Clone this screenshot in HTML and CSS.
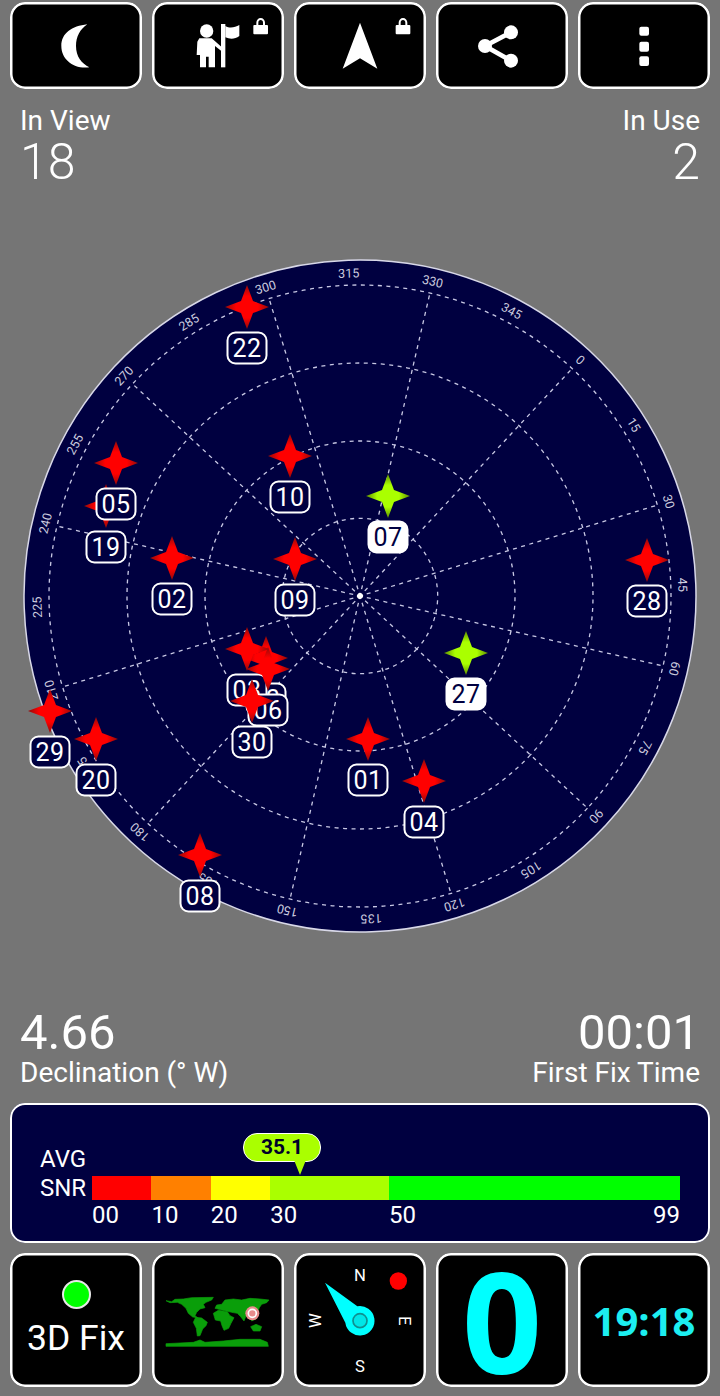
FILE: index.html
```html
<!DOCTYPE html>
<html lang="en">
<head>
    <meta charset="UTF-8">
    <meta name="viewport" content="width=device-width, initial-scale=1.0">
    <title>GPS Test</title>
    <link rel="stylesheet" href="styles.css">
</head>
<body>
    <div class="page">
        <!-- Top buttons -->
        <div class="tile-row tile-row-top">
            <div class="tile">
                <svg class="tile-art" viewBox="30 6 396 261">
                    <path class="art-white" d="M262 73C215 78 184 100 184 138C184 178 220 208 268 202C245 190 228 170 228 138C228 110 240 88 262 73Z"/>
                </svg>
            </div>
            <div class="tile">
                <svg class="tile-art" viewBox="6 6 396 261">
                    <circle class="art-white" cx="170" cy="93" r="20"/>
                    <path class="art-white" d="M148 115H185L214 140V153L195 138V202H176V170H168V202H150V165H140L142 125Z"/>
                    <rect class="art-white" x="213" y="72" width="13" height="130"/>
                    <path class="art-white" d="M226 78C240 86 255 82 268 75V108C255 118 240 118 226 112Z"/>
                    <path class="art-white" d="M310 78Q310 75 313 75H351Q354 75 354 78V100Q354 103 351 103H313Q310 103 310 100Z"/>
                    <path class="art-line" d="M322 76V68A10 11 0 0 1 342 68V76"/>
                </svg>
            </div>
            <div class="tile">
                <svg class="tile-art" viewBox="432 6 396 261">
                    <path class="art-white" d="M630 68L682 206L630 175L578 206Z"/>
                    <path class="art-white" d="M737 78Q737 75 740 75H778Q781 75 781 78V100Q781 103 778 103H740Q737 103 737 100Z"/>
                    <path class="art-line" d="M749 76V68A10 11 0 0 1 769 68V76"/>
                </svg>
            </div>
            <div class="tile">
                <svg class="tile-art" viewBox="18 6 396 261">
                    <circle class="art-white" cx="243" cy="97" r="21"/>
                    <circle class="art-white" cx="165" cy="138" r="21"/>
                    <circle class="art-white" cx="243" cy="182" r="21"/>
                    <path class="art-share" d="M243 97L165 138L243 182"/>
                </svg>
            </div>
            <div class="tile">
                <svg class="tile-art" viewBox="444 6 396 261">
                    <rect class="art-white" x="628" y="80" width="29" height="27" rx="6"/>
                    <rect class="art-white" x="628" y="125" width="29" height="30" rx="6"/>
                    <rect class="art-white" x="628" y="169" width="29" height="29" rx="6"/>
                </svg>
            </div>
        </div>

        <div class="stats stats-top">
            <div>
                <div class="stat-label">In View</div>
                <div class="stat-value">18</div>
            </div>
            <div class="stat-right">
                <div class="stat-label">In Use</div>
                <div class="stat-value">2</div>
            </div>
        </div>

        <!-- Sky plot -->
        <div class="radar">
            <svg class="radar-svg" viewBox="0 236 720 720">
                <defs>
                    <radialGradient id="star-red" gradientUnits="userSpaceOnUse" cx="0" cy="0" r="22">
                        <stop offset="0.5" stop-color="#ff0000"/>
                        <stop offset="1" stop-color="#8f0a0a"/>
                    </radialGradient>
                    <radialGradient id="star-green" gradientUnits="userSpaceOnUse" cx="0" cy="0" r="22">
                        <stop offset="0.5" stop-color="#aaff00"/>
                        <stop offset="1" stop-color="#5c8c00"/>
                    </radialGradient>
                    <path id="star" d="M0 -22L6 -6L22 0L6 6L0 22L-6 6L-22 0L-6 -6Z"/>
                </defs>

                <g transform="translate(360 595) rotate(43)">
                    <circle class="dial" r="336"/>
                    <circle class="ring" r="77.7"/>
                    <circle class="ring" r="155"/>
                    <circle class="ring" r="233"/>
                    <circle class="ring" r="311"/>
                    <line class="ring" y1="-7" y2="-311"/>
                    <line class="ring" y1="-7" y2="-311" transform="rotate(30)"/>
                    <line class="ring" y1="-7" y2="-311" transform="rotate(60)"/>
                    <line class="ring" y1="-7" y2="-311" transform="rotate(90)"/>
                    <line class="ring" y1="-7" y2="-311" transform="rotate(120)"/>
                    <line class="ring" y1="-7" y2="-311" transform="rotate(150)"/>
                    <line class="ring" y1="-7" y2="-311" transform="rotate(180)"/>
                    <line class="ring" y1="-7" y2="-311" transform="rotate(210)"/>
                    <line class="ring" y1="-7" y2="-311" transform="rotate(240)"/>
                    <line class="ring" y1="-7" y2="-311" transform="rotate(270)"/>
                    <line class="ring" y1="-7" y2="-311" transform="rotate(300)"/>
                    <line class="ring" y1="-7" y2="-311" transform="rotate(330)"/>
                    <circle class="hub" r="3"/>
                    <text class="tick" y="-318.5">0</text>
                    <text class="tick" y="-318.5" transform="rotate(15)">15</text>
                    <text class="tick" y="-318.5" transform="rotate(30)">30</text>
                    <text class="tick" y="-318.5" transform="rotate(45)">45</text>
                    <text class="tick" y="-318.5" transform="rotate(60)">60</text>
                    <text class="tick" y="-318.5" transform="rotate(75)">75</text>
                    <text class="tick" y="-318.5" transform="rotate(90)">90</text>
                    <text class="tick" y="-318.5" transform="rotate(105)">105</text>
                    <text class="tick" y="-318.5" transform="rotate(120)">120</text>
                    <text class="tick" y="-318.5" transform="rotate(135)">135</text>
                    <text class="tick" y="-318.5" transform="rotate(150)">150</text>
                    <text class="tick" y="-318.5" transform="rotate(165)">165</text>
                    <text class="tick" y="-318.5" transform="rotate(180)">180</text>
                    <text class="tick" y="-318.5" transform="rotate(195)">195</text>
                    <text class="tick" y="-318.5" transform="rotate(210)">210</text>
                    <text class="tick" y="-318.5" transform="rotate(225)">225</text>
                    <text class="tick" y="-318.5" transform="rotate(240)">240</text>
                    <text class="tick" y="-318.5" transform="rotate(255)">255</text>
                    <text class="tick" y="-318.5" transform="rotate(270)">270</text>
                    <text class="tick" y="-318.5" transform="rotate(285)">285</text>
                    <text class="tick" y="-318.5" transform="rotate(300)">300</text>
                    <text class="tick" y="-318.5" transform="rotate(315)">315</text>
                    <text class="tick" y="-318.5" transform="rotate(330)">330</text>
                    <text class="tick" y="-318.5" transform="rotate(345)">345</text>
                </g>

                <g class="sat" transform="translate(247 306)"><use href="#star"/><rect x="-19.5" y="25.5" width="39" height="31" rx="8"/><text y="49.5">22</text></g>
                <g class="sat" transform="translate(290 455)"><use href="#star"/><rect x="-19.5" y="25.5" width="39" height="31" rx="8"/><text y="49.5">10</text></g>
                <g class="sat sat-used" transform="translate(388 495)"><use href="#star"/><rect x="-19.5" y="25.5" width="39" height="31" rx="8"/><text y="49.5">07</text></g>
                <g class="sat" transform="translate(106 505)"><use href="#star"/><rect x="-19.5" y="25.5" width="39" height="31" rx="8"/><text y="49.5">19</text></g>
                <g class="sat" transform="translate(116 462)"><use href="#star"/><rect x="-19.5" y="25.5" width="39" height="31" rx="8"/><text y="49.5">05</text></g>
                <g class="sat" transform="translate(172 557)"><use href="#star"/><rect x="-19.5" y="25.5" width="39" height="31" rx="8"/><text y="49.5">02</text></g>
                <g class="sat" transform="translate(295 558)"><use href="#star"/><rect x="-19.5" y="25.5" width="39" height="31" rx="8"/><text y="49.5">09</text></g>
                <g class="sat" transform="translate(647 559)"><use href="#star"/><rect x="-19.5" y="25.5" width="39" height="31" rx="8"/><text y="49.5">28</text></g>
                <g class="sat sat-used" transform="translate(466 652)"><use href="#star"/><rect x="-19.5" y="25.5" width="39" height="31" rx="8"/><text y="49.5">27</text></g>
                <g class="sat" transform="translate(266 657)"><use href="#star"/><rect x="-19.5" y="25.5" width="39" height="31" rx="8"/><text y="49.5">13</text></g>
                <g class="sat" transform="translate(247 648)"><use href="#star"/><rect x="-19.5" y="25.5" width="39" height="31" rx="8"/><text y="49.5">03</text></g>
                <g class="sat" transform="translate(268 668)"><use href="#star"/><rect x="-19.5" y="25.5" width="39" height="31" rx="8"/><text y="49.5">06</text></g>
                <g class="sat" transform="translate(252 700)"><use href="#star"/><rect x="-19.5" y="25.5" width="39" height="31" rx="8"/><text y="49.5">30</text></g>
                <g class="sat" transform="translate(368 738)"><use href="#star"/><rect x="-19.5" y="25.5" width="39" height="31" rx="8"/><text y="49.5">01</text></g>
                <g class="sat" transform="translate(424 780)"><use href="#star"/><rect x="-19.5" y="25.5" width="39" height="31" rx="8"/><text y="49.5">04</text></g>
                <g class="sat" transform="translate(50 710)"><use href="#star"/><rect x="-19.5" y="25.5" width="39" height="31" rx="8"/><text y="49.5">29</text></g>
                <g class="sat" transform="translate(96 738)"><use href="#star"/><rect x="-19.5" y="25.5" width="39" height="31" rx="8"/><text y="49.5">20</text></g>
                <g class="sat" transform="translate(200 854)"><use href="#star"/><rect x="-19.5" y="25.5" width="39" height="31" rx="8"/><text y="49.5">08</text></g>
            </svg>
        </div>

        <div class="stats stats-bottom">
            <div>
                <div class="stat-value">4.66</div>
                <div class="stat-label">Declination (° W)</div>
            </div>
            <div class="stat-right">
                <div class="stat-value">00:01</div>
                <div class="stat-label">First Fix Time</div>
            </div>
        </div>

        <!-- Average SNR -->
        <div class="snr-panel">
            <div class="snr-names">
                <div>AVG</div>
                <div>SNR</div>
            </div>
            <div class="snr-scale">
                <div class="snr-bubble">35.1</div>
                <div class="snr-seg seg-10"><div class="snr-color color-red"></div><div class="snr-num">00</div></div>
                <div class="snr-seg seg-10"><div class="snr-color color-orange"></div><div class="snr-num">10</div></div>
                <div class="snr-seg seg-10"><div class="snr-color color-yellow"></div><div class="snr-num">20</div></div>
                <div class="snr-seg seg-20"><div class="snr-color color-lime"></div><div class="snr-num">30</div></div>
                <div class="snr-seg seg-49"><div class="snr-color color-green"></div><div class="snr-num snr-num-ends"><span>50</span><span>99</span></div></div>
            </div>
        </div>

        <!-- Bottom buttons -->
        <div class="tile-row tile-row-bottom">
            <div class="tile tile-fix">
                <div class="fix-dot"></div>
                <div class="fix-text">3D Fix</div>
            </div>
            <div class="tile">
                <svg class="tile-art" viewBox="6 -96 396 402">
                    <g class="land">
                        <path d="M48 47L65 50L75 43L100 42L125 38L190 37L185 45L168 52L160 58L165 68L150 72L140 82L135 92L143 98L128 96L115 85L108 70L95 58L82 52L60 53Z"/>
                        <path d="M137 97L155 99L172 112L168 122L158 132L150 152L142 153L139 130L130 112Z"/>
                        <path d="M195 70L200 60L215 58L225 45L250 42L275 45L300 40L330 42L357 45L350 53L335 58L328 68L322 82L312 90L318 102L305 108L298 95L288 92L282 108L272 95L262 85L245 82L228 78L215 75Z"/>
                        <path d="M190 85L205 76L232 80L240 92L252 98L243 115L236 130L222 136L216 122L212 108L196 105Z"/>
                        <path d="M302 125L318 118L335 125L330 138L310 138Z"/>
                        <path d="M48 176L90 174L130 172L150 165L165 172L220 168L270 163L330 163L352 172L355 184L48 184Z"/>
                    </g>
                    <circle class="pin-outer" cx="307" cy="85" r="21"/>
                    <circle class="pin-ring" cx="307" cy="85" r="12"/>
                </svg>
            </div>
            <div class="tile">
                <svg class="tile-art" viewBox="-18 -21 396 402">
                    <text class="compass-letter" x="180" y="62">N</text>
                    <text class="compass-letter" transform="translate(315 182) rotate(90)" y="17">E</text>
                    <text class="compass-letter" x="180" y="337">S</text>
                    <text class="compass-letter" transform="translate(45 182) rotate(-90)" y="17">W</text>
                    <circle class="compass-dot" cx="295" cy="63" r="26"/>
                    <path class="needle" d="M75 68L172 139A44 44 0 1 1 136 188Z"/>
                    <circle class="needle-eye" cx="180" cy="182" r="21"/>
                </svg>
            </div>
            <div class="tile tile-center">
                <span class="big-zero">0</span>
            </div>
            <div class="tile tile-center">
                <span class="clock">19:18</span>
            </div>
        </div>
    </div>
</body>
</html>
```

FILE: styles.css
```css
html, body {
    margin: 0;
    padding: 0;
    background: #757575;
}

.page {
    width: 720px;
    height: 1396px;
    box-sizing: border-box;
    padding: 2px 10px 9px;
    display: flex;
    flex-direction: column;
    font-family: Roboto, sans-serif;
    color: #fff;
    overflow: hidden;
}

/* Buttons */
.tile-row {
    display: flex;
    gap: 10px;
    flex: none;
}

.tile-row-top .tile {
    height: 87px;
}

.tile-row-bottom .tile {
    height: 134px;
}

.tile {
    width: 132px;
    box-sizing: border-box;
    background: #000;
    border-radius: 15px;
    box-shadow: inset 0 0 0 2.5px #fff;
}

.tile-art {
    display: block;
    width: 100%;
    height: 100%;
}

.tile-center {
    display: flex;
    justify-content: center;
    align-items: center;
}

.art-white {
    fill: #fff;
}

.art-line {
    fill: none;
    stroke: #fff;
    stroke-width: 6;
}

.art-share {
    fill: none;
    stroke: #fff;
    stroke-width: 14;
}

/* Number blocks */
.stats {
    display: flex;
    justify-content: space-between;
    padding: 0 10px;
    flex: none;
}

.stats-top {
    margin-top: 17px;
}

.stat-right {
    text-align: right;
}

.stat-label {
    font-size: 28px;
    line-height: 30px;
}

.stat-value {
    font-size: 49px;
    line-height: 51px;
}

.stats-top .stat-value {
    font-size: 50px;
    font-weight: 300;
    margin: 1px 0 -2px;
}

/* Sky plot */
.radar {
    flex: 1;
    margin: 0 -10px;
    display: flex;
    align-items: center;
}

.radar-svg {
    display: block;
    width: 720px;
    height: 720px;
    overflow: visible;
}

.dial {
    fill: #000040;
    stroke: #d8d8e8;
    stroke-width: 1.5;
}

.ring {
    fill: none;
    stroke: #c8c8e4;
    stroke-width: 1.3;
    stroke-dasharray: 4 4.5;
}

.hub {
    fill: #fff;
}

.tick {
    fill: #ccccdf;
    font-size: 12.5px;
    text-anchor: middle;
}

.sat use {
    fill: url(#star-red);
}

.sat rect {
    fill: #000040;
    stroke: #fff;
    stroke-width: 2;
}

.sat text {
    fill: #fff;
    font-size: 25px;
    letter-spacing: 0.5px;
    text-anchor: middle;
}

.sat-used use {
    fill: url(#star-green);
}

.sat-used rect {
    fill: #fff;
}

.sat-used text {
    fill: #000040;
}

/* SNR panel */
.snr-panel {
    flex: none;
    height: 140px;
    box-sizing: border-box;
    margin: 15px 0 10px;
    padding: 0 30px;
    display: flex;
    background: #000040;
    border-radius: 15px;
    box-shadow: inset 0 0 0 2px #fff;
}

.snr-names {
    width: 52px;
    flex: none;
    margin-top: 42px;
    font-size: 24px;
    line-height: 29px;
}

.snr-scale {
    flex: 1;
    display: flex;
    position: relative;
    margin-top: 73px;
}

.seg-10 {
    flex: 10;
}

.seg-20 {
    flex: 20;
}

.seg-49 {
    flex: 49;
}

.snr-color {
    height: 24px;
}

.color-red {
    background: #ff0000;
}

.color-orange {
    background: #ff8000;
}

.color-yellow {
    background: #ffff00;
}

.color-lime {
    background: #aaff00;
}

.color-green {
    background: #00ff00;
}

.snr-num {
    font-size: 24px;
    line-height: 31px;
}

.snr-num-ends {
    display: flex;
    justify-content: space-between;
}

.snr-bubble {
    position: absolute;
    left: 151px;
    top: -43px;
    width: 78px;
    height: 29px;
    box-sizing: border-box;
    background: #aaff00;
    border: 1px solid #fff;
    border-radius: 14px;
    color: #00002a;
    font-size: 21px;
    font-weight: 700;
    line-height: 27px;
    text-align: center;
}

.snr-bubble::after {
    content: "";
    position: absolute;
    left: 50px;
    top: 26px;
    border-left: 6px solid transparent;
    border-right: 6px solid transparent;
    border-top: 15px solid #aaff00;
}

/* 3D fix */
.tile-fix {
    display: flex;
    flex-direction: column;
    align-items: center;
    padding-top: 27px;
}

.fix-dot {
    width: 29px;
    height: 29px;
    box-sizing: border-box;
    background: #00ff00;
    border: 2px solid #e8e8e8;
    border-radius: 50%;
}

.fix-text {
    margin-top: 9px;
    font-size: 35.5px;
    line-height: 40px;
}

/* Map */
.land {
    fill: #0a9e0a;
    stroke: #0a9e0a;
    stroke-width: 2;
}

.pin-outer {
    fill: #e88c8c;
}

.pin-ring {
    fill: #e88c8c;
    stroke: #fff;
    stroke-width: 5;
}

/* Compass */
.compass-letter {
    fill: #fff;
    font-size: 50px;
    text-anchor: middle;
}

.compass-dot {
    fill: #ff0000;
}

.needle {
    fill: #00ffff;
}

.needle-eye {
    fill: #00e6e6;
    stroke: #0f8f8f;
    stroke-width: 5;
}

/* Big cyan readouts */
.big-zero {
    font-family: "Open Sans", sans-serif;
    font-size: 140px;
    font-weight: 700;
    line-height: 110px;
    color: #00ffff;
}

.clock {
    font-family: "Open Sans", sans-serif;
    font-size: 40px;
    font-weight: 700;
    color: #1ceef0;
}
```
